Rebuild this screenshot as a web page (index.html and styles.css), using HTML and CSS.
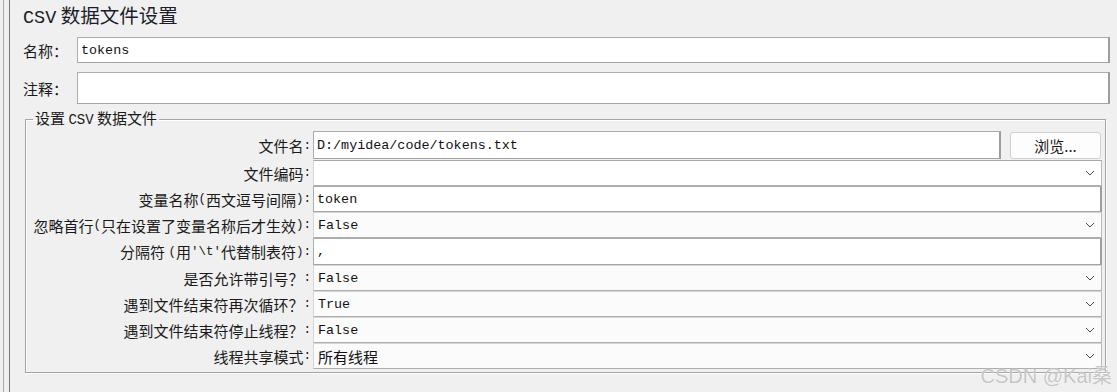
FILE: index.html
```html
<!DOCTYPE html>
<html lang="zh-CN">
<head>
    <meta charset="UTF-8">
    <title>CSV 数据文件设置</title>
    <link rel="stylesheet" href="styles.css">
</head>
<body>
    <div class="page">
        <div class="splitter"></div>
        <div class="panel">
            <div class="title"><span class="en">CSV</span> 数据文件设置</div>

            <div class="top-row name-row">
                <div class="top-label">名称：</div>
                <div class="text-field">tokens</div>
            </div>
            <div class="top-row comment-row">
                <div class="top-label">注释：</div>
                <div class="text-field"></div>
            </div>

            <fieldset class="csv-box">
                <legend>设置 <span class="en">CSV</span> 数据文件</legend>
                <div class="form-grid">
                    <div class="form-label">文件名<span class="en">:</span></div>
                    <div class="text-field file-field">D:/myidea/code/tokens.txt</div>
                    <button class="browse-btn">浏览...</button>

                    <div class="form-label">文件编码<span class="en">:</span></div>
                    <div class="combo editable"><span></span>
                        <svg class="chevron" width="10" height="6" viewBox="0 0 10 6"><path d="M1 1 L5 5 L9 1" fill="none" stroke="#4a4a4a" stroke-width="1"/></svg>
                    </div>

                    <div class="form-label">变量名称<span class="en">(</span>西文逗号间隔<span class="en">):</span></div>
                    <div class="text-field wide">token</div>

                    <div class="form-label">忽略首行<span class="en">(</span>只在设置了变量名称后才生效<span class="en">):</span></div>
                    <div class="combo"><span>False</span>
                        <svg class="chevron" width="10" height="6" viewBox="0 0 10 6"><path d="M1 1 L5 5 L9 1" fill="none" stroke="#4a4a4a" stroke-width="1"/></svg>
                    </div>

                    <div class="form-label">分隔符&nbsp;<span class="en">(</span>用<span class="en">'\t'</span>代替制表符<span class="en">):</span></div>
                    <div class="text-field wide">,</div>

                    <div class="form-label">是否允许带引号？<span class="en">:</span></div>
                    <div class="combo"><span>False</span>
                        <svg class="chevron" width="10" height="6" viewBox="0 0 10 6"><path d="M1 1 L5 5 L9 1" fill="none" stroke="#4a4a4a" stroke-width="1"/></svg>
                    </div>

                    <div class="form-label">遇到文件结束符再次循环？<span class="en">:</span></div>
                    <div class="combo"><span>True</span>
                        <svg class="chevron" width="10" height="6" viewBox="0 0 10 6"><path d="M1 1 L5 5 L9 1" fill="none" stroke="#4a4a4a" stroke-width="1"/></svg>
                    </div>

                    <div class="form-label">遇到文件结束符停止线程？<span class="en">:</span></div>
                    <div class="combo"><span>False</span>
                        <svg class="chevron" width="10" height="6" viewBox="0 0 10 6"><path d="M1 1 L5 5 L9 1" fill="none" stroke="#4a4a4a" stroke-width="1"/></svg>
                    </div>

                    <div class="form-label">线程共享模式<span class="en">:</span></div>
                    <div class="combo"><span class="cjk">所有线程</span>
                        <svg class="chevron" width="10" height="6" viewBox="0 0 10 6"><path d="M1 1 L5 5 L9 1" fill="none" stroke="#4a4a4a" stroke-width="1"/></svg>
                    </div>
                </div>
            </fieldset>
        </div>
    </div>
    <div class="watermark">CSDN @Kai桑</div>
</body>
</html>
```

FILE: styles.css
```css
body {
    margin: 0;
    background-color: #f0f0f0;
    font-family: "Noto Sans CJK SC", sans-serif;
    font-size: 15px;
    color: #1a1a1a;
    height: 392px;
    overflow: hidden;
}
.page {
    display: flex;
    height: 392px;
}
.splitter {
    margin-left: 3px;
    width: 5px;
    border-left: 1px solid #a8a8a8;
    border-right: 1px solid #7a7a7a;
}
.panel {
    flex: 1;
    padding: 0 7px 0 13px;
}
.en {
    font-family: "Liberation Mono", monospace;
    font-size: 12.5px;
}
.title {
    font-size: 19.5px;
    height: 31px;
    line-height: 30px;
    color: #1c1c2a;
}
.title .en {
    font-size: 18.5px;
}
.top-row {
    display: flex;
    align-items: center;
}
.name-row {
    margin-top: 6px;
    height: 26px;
}
.comment-row {
    margin-top: 9px;
    height: 32px;
}
.top-label {
    width: 54px;
    flex: none;
}
.top-row .text-field {
    flex: 1;
    height: 100%;
}
.text-field {
    box-sizing: border-box;
    display: flex;
    align-items: center;
    padding-left: 3px;
    background-color: #fff;
    border: 1px solid #acacac;
    border-right: 2px solid #9c9c9c;
    border-bottom-color: #a4a4a4;
    font-family: "Liberation Mono", monospace;
    font-size: 13.4px;
    color: #111;
}
.csv-box {
    margin: 5px 4px 0 2px;
    padding: 2px 3px 3px 2px;
    border: 1px solid #a4a4a4;
    box-shadow: 1px 1px 0 #fff, inset 1px 1px 0 #fff;
}
.csv-box legend {
    margin-left: 5px;
    padding: 0 2px;
    line-height: 18px;
    font-size: 15px;
}
.csv-box legend .en {
    font-size: 14px;
}
.form-grid {
    display: grid;
    grid-template-columns: 283px 1fr auto;
    grid-template-rows: 29px 26px 26px 26px 27px 26px 26px 26px 26px;
    column-gap: 2px;
}
.form-label {
    grid-column: 1;
    display: flex;
    align-items: center;
    justify-content: flex-end;
    white-space: nowrap;
}
.file-field {
    height: 28px;
}
.wide,
.combo {
    grid-column: 2 / 4;
}
.browse-btn {
    width: 91px;
    height: 27px;
    margin: 1px 1px 0 7px;
    padding: 0;
    background-color: #fdfdfd;
    border: 1px solid #d0d0d0;
    border-radius: 3px;
    font-family: "Noto Sans CJK SC", sans-serif;
    font-size: 15px;
    color: #1a1a1a;
}
.combo {
    box-sizing: border-box;
    display: flex;
    align-items: center;
    justify-content: space-between;
    padding-left: 4px;
    background-color: #fbfbfb;
    border: 1px solid #d6d6d6;
    border-bottom-color: #aeaeae;
    border-right-color: #b8b8b8;
    font-family: "Liberation Mono", monospace;
    font-size: 13.4px;
    color: #111;
}
.combo.editable {
    background-color: #fff;
    border-top-color: #a8a8a8;
}
.combo .cjk {
    font-family: "Noto Sans CJK SC", sans-serif;
    font-size: 15px;
}
.chevron {
    margin-right: 6px;
}
.watermark {
    position: absolute;
    right: 5px;
    bottom: 3px;
    font-family: "Liberation Sans", "Noto Sans CJK SC", sans-serif;
    font-size: 20px;
    color: rgba(150, 150, 150, 0.55);
    text-shadow: 0 0 1px #fff;
}
```
